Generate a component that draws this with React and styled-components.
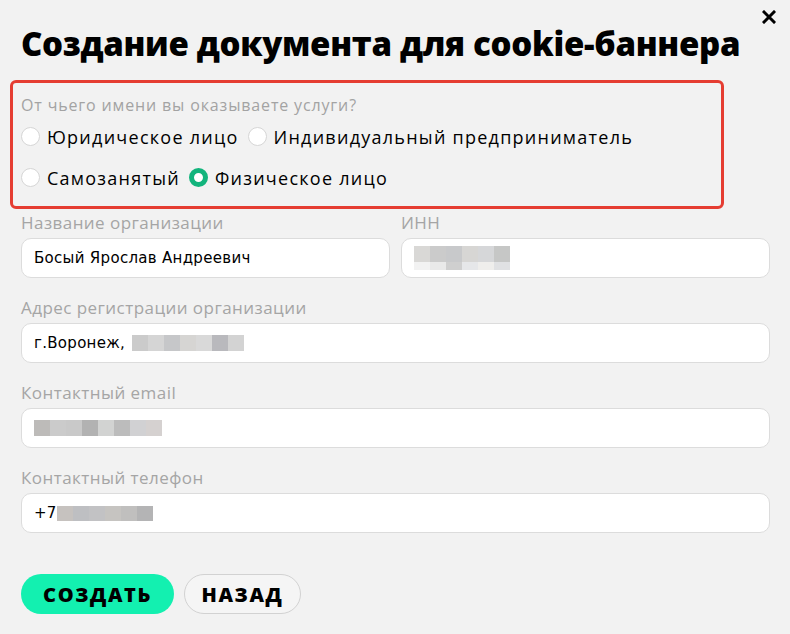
import React from "react";
import styled, { createGlobalStyle } from "styled-components";

const Global = createGlobalStyle`
  html, body { margin: 0; padding: 0; background: #f2f2f2; }
  body { font-family: "Open Sans", "Liberation Sans", sans-serif; }
  * { box-sizing: border-box; }
`;

const Page = styled.div`
  position: relative;
  width: 790px;
  height: 634px;
  background: #f2f2f2;
  padding: 21px 20px 0 21px;
`;

const Close = styled.button`
  position: absolute;
  top: 8px;
  right: 12px;
  border: 0;
  background: transparent;
  padding: 0;
  width: 18px;
  height: 18px;
  display: flex;
  align-items: center;
  justify-content: center;
`;

const Title = styled.h1`
  margin: 0;
  font-family: "Open Sans", sans-serif;
  font-weight: 800;
  font-size: 33px;
  line-height: 45px;
  color: #000;
  letter-spacing: -0.3px;
`;

const Highlight = styled.fieldset`
  margin: 14px 0 0 -11px;
  width: 714px;
  border: 3px solid #e53d32;
  border-radius: 6px;
  padding: 11px 8px 8px 8px;
  display: flex;
  flex-direction: column;
`;

const Question = styled.div`
  font-family: "Open Sans", sans-serif;
  font-size: 16px;
  letter-spacing: 0.85px;
  color: #a3a3a3;
  line-height: 22px;
`;

const RadioRow = styled.div`
  display: flex;
  align-items: center;
  gap: 9px;
  height: 41px;
`;

const RadioItem = styled.label`
  display: flex;
  align-items: center;
  gap: 7px;
  font-family: "Open Sans", sans-serif;
  font-size: 18px;
  letter-spacing: 1.25px;
  color: #000;
`;

const Dot = styled.span`
  width: 19px;
  height: 19px;
  border-radius: 50%;
  flex: none;
  background: #fff;
  border: ${(p) => (p.$on ? "5px solid #12b47c" : "1px solid #d6d6d6")};
`;

const Grid = styled.div`
  display: grid;
  grid-template-columns: 1fr 1fr;
  column-gap: 11px;
  row-gap: 19px;
  margin-top: 3px;
`;

const Field = styled.div`
  grid-column: ${(p) => (p.$full ? "1 / -1" : "auto")};
  display: flex;
  flex-direction: column;
  gap: 4px;
`;

const Label = styled.div`
  font-family: "Open Sans", sans-serif;
  font-size: 17px;
  letter-spacing: 0.45px;
  line-height: 22px;
  color: #a5a5a5;
`;

const Input = styled.div`
  height: 40px;
  background: #fff;
  border: 1px solid #dcdcdc;
  border-radius: 10px;
  display: flex;
  align-items: center;
  padding: 0 12px;
  font-family: "DejaVu Sans", sans-serif;
  font-size: 15px;
  letter-spacing: 0.3px;
  color: #000;
`;

const Blur = styled.span`
  display: inline-flex;
  flex-direction: column;
  margin-left: ${(p) => p.$ml || 0}px;
`;

const BlurLine = styled.span`
  display: flex;
  height: ${(p) => p.$h}px;
`;

const Px = styled.span`
  width: 16px;
  height: 100%;
`;

const Pixels = ({ rows, ml }) => (
  <Blur $ml={ml}>
    {rows.map((r, i) => (
      <BlurLine key={i} $h={r.h}>
        {r.c.map((c, j) => (
          <Px key={j} style={{ background: c }} />
        ))}
      </BlurLine>
    ))}
  </Blur>
);

const Actions = styled.div`
  display: flex;
  gap: 10px;
  margin-top: 41px;
`;

const Btn = styled.button`
  height: 40px;
  border-radius: 20px;
  padding: 0;
  border: ${(p) => (p.$primary ? "0" : "1px solid #d2d2d2")};
  background: ${(p) => (p.$primary ? "#13f0b0" : "#f5f5f5")};
  font-family: "Open Sans", sans-serif;
  font-weight: 800;
  font-size: 20px;
  letter-spacing: 1.6px;
  color: #000;
  width: ${(p) => p.$w}px;
`;

export default function App() {
  return (
    <>
      <Global />
      <Page>
        <Close aria-label="close">
          <svg width="14" height="14" viewBox="0 0 14 14">
            <path d="M2 2L12 12M12 2L2 12" stroke="#000" strokeWidth="3" strokeLinecap="square" />
          </svg>
        </Close>
        <Title>Создание документа для cookie-баннера</Title>
        <Highlight>
          <Question>От чьего имени вы оказываете услуги?</Question>
          <RadioRow>
            <RadioItem><Dot />Юридическое лицо</RadioItem>
            <RadioItem><Dot />Индивидуальный предприниматель</RadioItem>
          </RadioRow>
          <RadioRow>
            <RadioItem><Dot />Самозанятый</RadioItem>
            <RadioItem><Dot $on />Физическое лицо</RadioItem>
          </RadioRow>
        </Highlight>
        <Grid>
          <Field>
            <Label>Название организации</Label>
            <Input>Босый Ярослав Андреевич</Input>
          </Field>
          <Field>
            <Label>ИНН</Label>
            <Input>
              <Pixels
                rows={[
                  { h: 16, c: ["#d9d8d6", "#cbcbcb", "#c8c9cb", "#d7d6d4", "#d6d7d9", "#c6c7c6"] },
                  { h: 8, c: ["#f2f2f2", "#e9e9e9", "#cfcfcf", "#e6e7e9", "#efeeec", "#e0e1e3"] },
                ]}
              />
            </Input>
          </Field>
          <Field $full>
            <Label>Адрес регистрации организации</Label>
            <Input>
              г.Воронеж,
              <Pixels
                ml={7}
                rows={[{ h: 16, c: ["#cbcbcb", "#d5d5d5", "#c6c7c9", "#d6d5d3", "#d9d9d9", "#b9b9bd", "#d3d3d3"] }]}
              />
            </Input>
          </Field>
          <Field $full>
            <Label>Контактный email</Label>
            <Input>
              <Pixels
                rows={[{ h: 16, c: ["#bdbbb9", "#cbcbcb", "#c9c9c9", "#b2b2b2", "#d2d3d2", "#bcbcbc", "#d1d1d3", "#d5d1d0"] }]}
              />
            </Input>
          </Field>
          <Field $full>
            <Label>Контактный телефон</Label>
            <Input>
              +7
              <Pixels
                rows={[{ h: 15, c: ["#c6c2bf", "#bebfc2", "#c2c2c4", "#c6c4c1", "#c0bfbe", "#b4b4b5"] }]}
              />
            </Input>
          </Field>
        </Grid>
        <Actions>
          <Btn $primary $w={153}>СОЗДАТЬ</Btn>
          <Btn $w={117}>НАЗАД</Btn>
        </Actions>
      </Page>
    </>
  );
}
